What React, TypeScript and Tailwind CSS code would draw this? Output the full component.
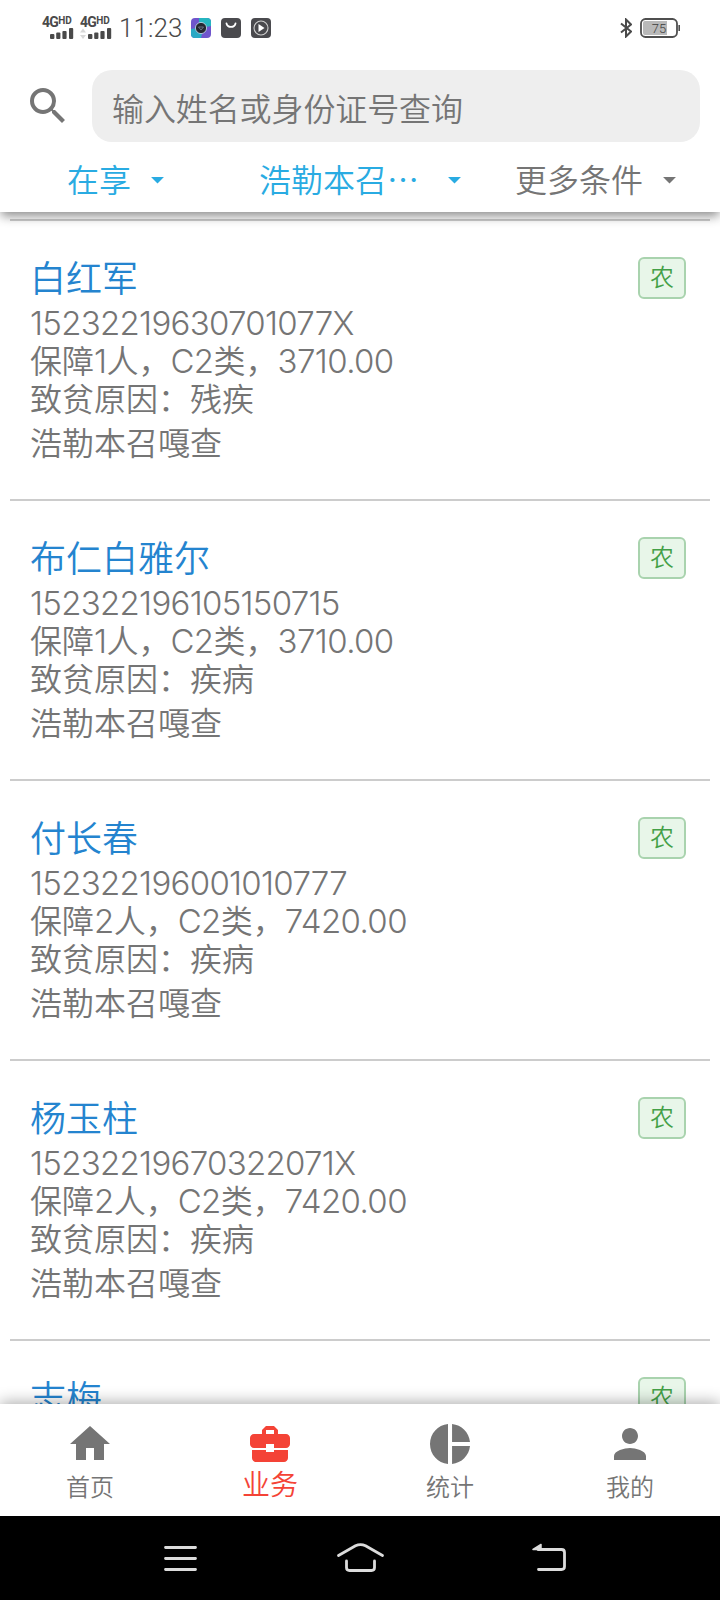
import type { ReactNode } from "react";
import {
  MdArrowDropDown,
  MdBusinessCenter,
  MdHome,
  MdPerson,
  MdPieChart,
  MdSearch,
} from "react-icons/md";

interface Person {
  name: string;
  idNo: string;
  people: number;
  amount: string;
  reason: string;
  village: string;
}

const people: Person[] = [
  { name: "白红军", idNo: "15232219630701077X", people: 1, amount: "3710.00", reason: "残疾", village: "浩勒本召嘎查" },
  { name: "布仁白雅尔", idNo: "152322196105150715", people: 1, amount: "3710.00", reason: "疾病", village: "浩勒本召嘎查" },
  { name: "付长春", idNo: "152322196001010777", people: 2, amount: "7420.00", reason: "疾病", village: "浩勒本召嘎查" },
  { name: "杨玉柱", idNo: "15232219670322071X", people: 2, amount: "7420.00", reason: "疾病", village: "浩勒本召嘎查" },
  { name: "志梅", idNo: "", people: 0, amount: "", reason: "", village: "" },
];

function SignalIcon({ withArrows = false }: { withArrows?: boolean }) {
  return (
    <div className="h-[22px] w-[32px] text-[#4a4a4a]">
      <div className="flex h-[11px] items-start font-['Roboto',sans-serif] font-bold">
        <span className="text-[14px] leading-[11px] tracking-[-0.7px]">4G</span>
        <span className="text-[10px] leading-[8px]">HD</span>
      </div>
      <svg className="h-[11px] w-[32px]" viewBox="0 0 32 11" fill="currentColor">
        {withArrows && <path d="M0 4.500l3-4 3 4zM0 7l3 4 3-4z" fill="#d8d8d8" />}
        <rect x="8" y="6" width="4.4" height="5" rx="1" />
        <rect x="14.2" y="4.6" width="4.200" height="6.4" rx="1" />
        <rect x="20.4" y="3" width="4.2" height="8" rx="1" />
        <rect x="27" y="0" width="4.2" height="11" rx="1" />
      </svg>
    </div>
  );
}

function StatusBar() {
  return (
    <div className="flex h-14 items-center pr-10 pl-[42px]">
      <SignalIcon />
      <div className="ml-1.5">
        <SignalIcon withArrows />
      </div>
      <span className="ml-[7px] w-[64px] font-['Roboto',sans-serif] text-[26px] leading-none tracking-[0.1px] text-[#4a4a4a]">
        11:23
      </span>
      <svg className="ml-[8px] h-5 w-5" viewBox="0 0 20 20">
        <defs>
          <clipPath id="app">
            <rect width="20" height="20" rx="4" />
          </clipPath>
        </defs>
        <g clipPath="url(#app)">
          <rect width="20" height="20" fill="#6f55cc" />
          <path d="M8 0h12v8l-5 1-7-5z" fill="#25b5c0" />
          <path d="M0 11l6-1 5 6-1 4H0z" fill="#2aa9c4" />
          <circle cx="10" cy="10" r="5.6" fill="#24262f" stroke="#b9cfe0" strokeWidth="0.9" />
          <path d="M7.5 9h5L10 12z" fill="none" stroke="#7d8799" strokeWidth="0.8" />
        </g>
      </svg>
      <svg className="ml-[10px] h-5 w-5" viewBox="0 0 20 20">
        <rect width="20" height="20" rx="4" fill="#4a4a4e" />
        <path d="M5.500 5.500c1 4.600 8 4.600 9 0" fill="none" stroke="#fff" strokeWidth="1.8" strokeLinecap="round" />
      </svg>
      <svg className="ml-[10px] h-5 w-5" viewBox="0 0 20 20">
        <rect width="20" height="20" rx="4" fill="#4a4a4e" />
        <circle cx="10" cy="10" r="7" fill="none" stroke="#cfcfcf" strokeWidth="1.1" />
        <path d="M7.5 6l6 4-6 4z" fill="#fff" />
      </svg>
      <svg className="ml-auto h-5 w-3" viewBox="0 0 12 20" fill="none" stroke="#4a4a4a" strokeWidth="2">
        <path d="M1 5.500l10 8-5 5V1.500l5 5-10 8" />
      </svg>
      <svg className="ml-2 h-5 w-10" viewBox="0 0 40 20">
        <rect x="1" y="1" width="36" height="18" rx="4.5" fill="#fff" stroke="#4f4f4f" strokeWidth="1.8" />
        <path d="M5 3h22v14H5a2 2 0 0 1-2-2V5a2 2 0 0 1 2-2z" fill="#b9b9b9" />
        <rect x="38.4" y="7" width="1.6" height="6" fill="#4f4f4f" />
        <text x="19" y="14.700" textAnchor="middle" fontSize="13" fontFamily="Roboto, sans-serif" fill="#3d3d3d">
          75
        </text>
      </svg>
    </div>
  );
}

function FilterLabel({ children }: { children: ReactNode }) {
  return <span className="pb-[3px]">{children}</span>;
}

function Header() {
  return (
    <header className="relative z-10 h-[212px] bg-white shadow-[0_5px_10px_-1px_rgba(0,0,0,0.45)]">
      <StatusBar />
      <div className="flex items-start pt-[14px] pr-5">
        <MdSearch className="mt-3 ml-6 h-12 w-12 text-[#757575]" />
        <div className="ml-5 flex h-[72px] flex-1 items-center rounded-[20px] bg-[#eeeeee] pt-px pl-[20px] text-[32px] tracking-[-0.1px] text-[#757575]">
          输入姓名或身份证号查询
        </div>
      </div>
      <div className="flex h-[74px] items-center text-[32px] text-[#29abe2]">
        <div className="flex w-[190px] items-center pl-[67px]">
          <FilterLabel>在享</FilterLabel>
          <MdArrowDropDown className="ml-[11px] h-[31px] w-[31px]" />
        </div>
        <div className="flex w-[290px] items-center pl-[69px]">
          <FilterLabel>浩勒本召…</FilterLabel>
          <MdArrowDropDown className="ml-[20px] h-[31px] w-[31px]" />
        </div>
        <div className="flex items-center pl-[35px] text-[#757575]">
          <FilterLabel>更多条件</FilterLabel>
          <MdArrowDropDown className="ml-[11px] h-[31px] w-[31px]" />
        </div>
      </div>
    </header>
  );
}

function Num({ children }: { children: ReactNode }) {
  return <span className="font-['Inter',sans-serif] text-[33px] font-light tracking-[-0.6px]">{children}</span>;
}

function PersonCard({ person }: { person: Person }) {
  return (
    <li className="mx-2.5 flex h-[280px] shrink-0 justify-between border-t-2 border-[#cccccc] pr-6 pl-5 text-[32px] leading-[38px] text-[#757575]">
      <div className="pt-[31px] whitespace-nowrap">
        <h2 className="mb-1 text-[36px] leading-[48px] text-[#2484cf]">{person.name}</h2>
        {person.idNo && (
          <>
            <p className="font-['Inter',sans-serif] text-[33px] font-light tracking-[-0.7px]">{person.idNo}</p>
            <p className="-mt-0.5 h-[38px]">
              保障<Num>{person.people}</Num>人，<Num>C2</Num>类，<Num>{person.amount}</Num>
            </p>
            <p>致贫原因：{person.reason}</p>
            <p className="mt-1.5">{person.village}</p>
          </>
        )}
      </div>
      <span className="mt-9 flex h-[42px] w-12 justify-center rounded-md border-2 border-[#a9d3ae] bg-[#e8f6e9] text-[24px] leading-[34px] text-[#43a047]">
        农
      </span>
    </li>
  );
}

const tabs = [
  { label: "首页", Icon: MdHome },
  { label: "业务", Icon: MdBusinessCenter, active: true },
  { label: "统计", Icon: MdPieChart },
  { label: "我的", Icon: MdPerson },
];

function TabBar() {
  return (
    <nav className="relative z-10 grid h-28 shrink-0 grid-cols-4 bg-white pt-4 shadow-[0_-2px_14px_rgba(0,0,0,0.32)]">
      {tabs.map(({ label, Icon, active }) => (
        <div
          key={label}
          className={
            active
              ? "flex flex-col items-center text-[28px] leading-[30px] text-[#f44336]"
              : "flex flex-col items-center text-[24px] leading-[35px] text-[#757575]"
          }
        >
          <Icon className="h-12 w-12" />
          {label}
        </div>
      ))}
    </nav>
  );
}

function SystemNav() {
  return (
    <div className="relative z-20 h-[84px] shrink-0 bg-black">
      <svg
        className="h-[84px] w-[720px]"
        viewBox="0 0 720 84"
        fill="none"
        stroke="#dcdcdc"
        strokeWidth="2.8"
        strokeLinecap="round"
        strokeLinejoin="round"
      >
        <path d="M165.500 31.500h30M165.500 42.500h30M165.500 53.500h30" />
        <path d="M338.500 39.500l17-9.700q5-2.500 10 0l17 9.700" />
        <path d="M346.500 45v6.500q0 3 3 3h22q3 0 3-3V45" />
        <path d="M538 33.500h23.500q3 0 3 3V50.500q0 3-3 3H538.500" />
        <path d="M533 33.500l8-5v5z" fill="#dcdcdc" strokeWidth="1.5" />
      </svg>
    </div>
  );
}

export default function App() {
  return (
    <div
      className="flex h-[1600px] w-[720px] flex-col overflow-hidden bg-white font-['Noto_Sans_CJK_SC',sans-serif] font-[350]"
      lang="zh-CN"
    >
      <Header />
      <ul className="flex min-h-0 flex-1 flex-col overflow-hidden pt-[7px]">
        {people.map((person) => (
          <PersonCard key={person.name} person={person} />
        ))}
      </ul>
      <TabBar />
      <SystemNav />
    </div>
  );
}
